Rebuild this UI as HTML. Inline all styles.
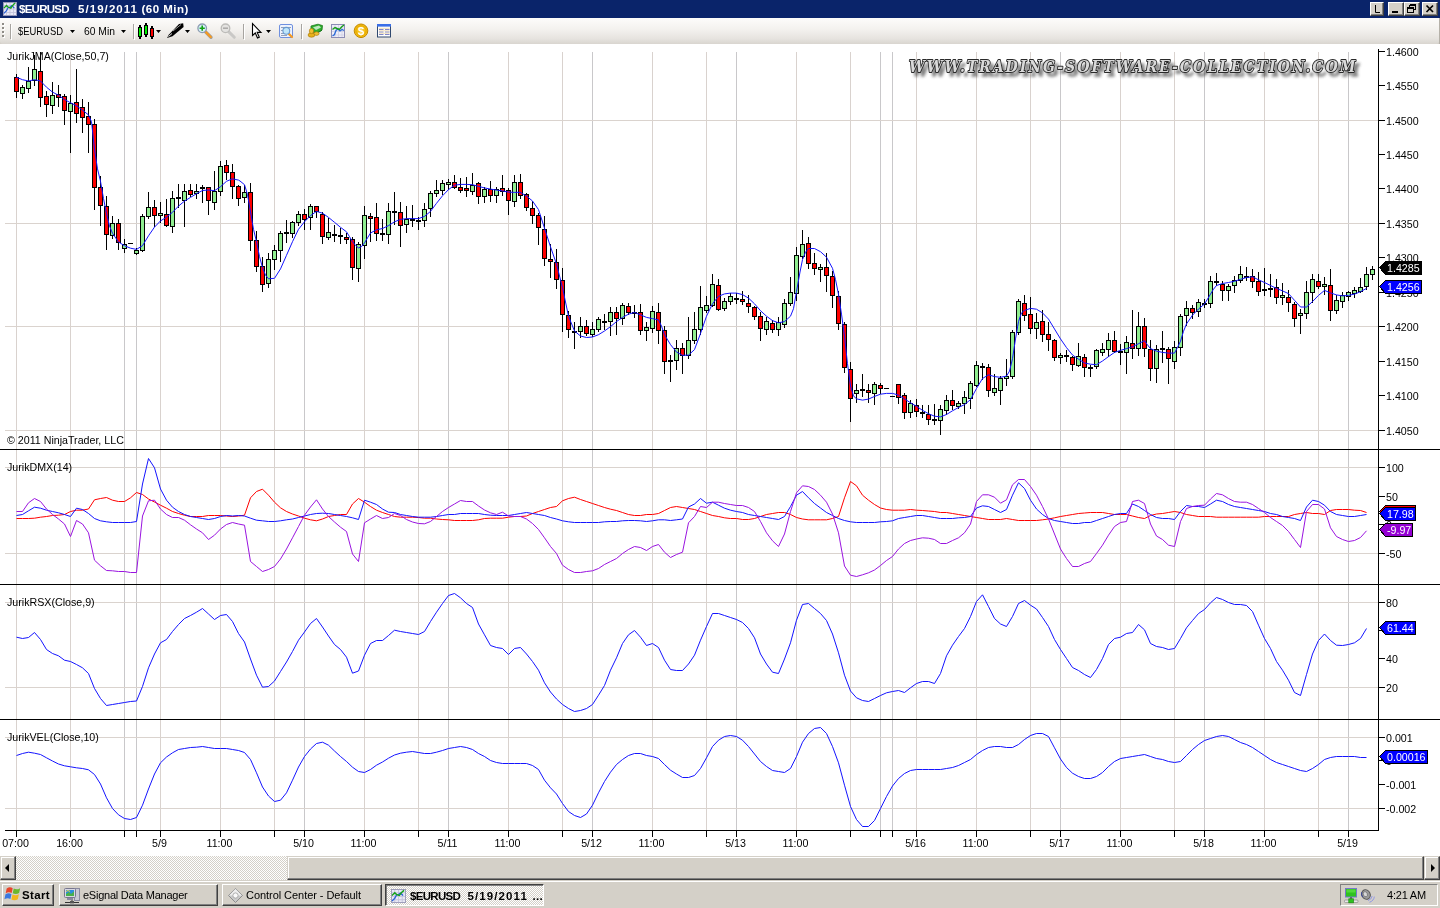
<!DOCTYPE html>
<html><head><meta charset="utf-8"><title>$EURUSD 5/19/2011 (60 Min)</title>
<style>
html,body{margin:0;padding:0}
body{width:1440px;height:908px;overflow:hidden;background:#d4d0c8;position:relative;font-family:"Liberation Sans",Arial,sans-serif;font-size:11px;color:#000}
.abs{position:absolute}
#title,#tb,#chartwrap,#task,.tbtn,#tray{will-change:transform}
#title{left:0;top:0;width:1440px;height:18px;background:#0a246a}
#title .t{left:19px;top:2px;color:#fff;font-weight:bold;font-size:11.5px;line-height:14px;white-space:pre;letter-spacing:0.39px}
.cb{top:2px;height:14px;background:#d4d0c8;box-sizing:border-box;border:1px solid;border-color:#fff #404040 #404040 #fff;box-shadow:inset -1px -1px 0 #808080}
#tb{left:0;top:18px;width:1439px;height:26px;background:linear-gradient(#fdfcfb 0%,#f3f1ee 45%,#e6e3df 80%,#d9d5cf 100%);border-radius:0 0 3px 3px}
#tbr{left:1439px;top:18px;width:1px;height:26px;background:#b5b1a9}
.tt{top:7px;font-size:11px;line-height:13px;white-space:pre}
.sep{top:6px;width:1px;height:16px;background:#a6a39d;box-shadow:1px 0 0 #fff}
.arr{width:0;height:0;border-left:3px solid transparent;border-right:3px solid transparent;border-top:3px solid #000}
#chart{left:0;top:44px}
#sb{left:0;top:856px;width:1440px;height:24px;background-color:#fff;background-image:linear-gradient(45deg,#d4d0c8 25%,transparent 25%,transparent 75%,#d4d0c8 75%),linear-gradient(45deg,#d4d0c8 25%,transparent 25%,transparent 75%,#d4d0c8 75%);background-size:2px 2px;background-position:1px 0,0 1px}
.sbb{background:#d4d0c8;box-sizing:border-box;border:1px solid;border-color:#d4d0c8 #404040 #404040 #d4d0c8;box-shadow:inset -1px -1px 0 #808080,inset 1px 1px 0 #fff}
.btn3{background:#d4d0c8;box-sizing:border-box;border:1px solid;border-color:#fff #404040 #404040 #fff;box-shadow:inset -1px -1px 0 #808080,inset 1px 1px 0 #d4d0c8}
#task{left:0;top:880px;width:1440px;height:28px;background:#d4d0c8;border-top:1px solid #d4d0c8;box-shadow:inset 0 1px 0 #fff;box-sizing:border-box}
.tbtn{top:884px;height:22px;font-size:11px;line-height:20px;white-space:pre}
.tbtn span{position:absolute;top:0}
</style></head><body>
<div id="title" class="abs">
<svg class="abs" style="left:3px;top:2px" width="14" height="14" viewBox="0 0 16 16"><rect x="0.5" y="0.5" width="15" height="15" fill="#e9e9f6" stroke="#9a9ab8"/><path d="M4 1V15M8 1V15M12 1V15M1 4H15M1 8H15M1 12H15" stroke="#c4c4dc" stroke-width="1"/><path d="M1 13L4 10L6 6L8 6L10 4L13 7" fill="none" stroke="#2a62d8" stroke-width="1.4"/><path d="M1 7L4 4L6 6L9 7L11 4L14 1" fill="none" stroke="#17a317" stroke-width="1.5"/></svg>
<div class="abs t" style="left:19px;letter-spacing:-0.74px">$EURUSD</div><div class="abs t" style="left:78px;letter-spacing:1.06px">5/19/2011</div><div class="abs t" style="left:141.5px;letter-spacing:0.48px">(60 Min)</div>
<div class="abs cb" style="left:1370px;width:14px"><svg class="abs" style="left:0;top:0" width="12" height="12"><path d="M4.5 2V9.5H9" fill="none" stroke="#000" stroke-width="1"/></svg></div>
<div class="abs cb" style="left:1388px;width:16px"><svg class="abs" style="left:0;top:0" width="14" height="12"><rect x="3" y="8" width="6" height="2" fill="#000"/></svg></div>
<div class="abs cb" style="left:1404px;width:16px"><svg class="abs" style="left:0;top:0" width="14" height="12" shape-rendering="crispEdges"><path d="M4.5 1.5H10.5V6.5H8.5M4.5 2.5H10.5M4.5 1.5V3.5" fill="none" stroke="#000"/><path d="M2.5 4.5H8.5V9.5H2.5ZM2.5 5.5H8.5" fill="none" stroke="#000"/></svg></div>
<div class="abs cb" style="left:1422px;width:16px"><svg class="abs" style="left:0;top:0" width="14" height="12"><path d="M3.5 2.5L10 9M10 2.5L3.5 9" fill="none" stroke="#000" stroke-width="1.7"/></svg></div>
</div>
<div id="tb" class="abs">
<svg class="abs" style="left:0;top:0" width="420" height="26" viewBox="0 18 420 26">
<g shape-rendering="crispEdges">
<path d="M2 23h2v2h-2zM2 27h2v2h-2zM2 31h2v2h-2zM2 35h2v2h-2z" fill="#fff" transform="translate(1,1)"/>
<path d="M2 23h2v2h-2zM2 27h2v2h-2zM2 31h2v2h-2zM2 35h2v2h-2z" fill="#8e8b86"/>
<path d="M10.5 24V39M133.5 24V39M243.5 24V39M301.5 24V39" stroke="#a7a4a0" fill="none"/>
<path d="M11.5 25V40M134.5 25V40M244.5 25V40M302.5 25V40" stroke="#fff" fill="none"/>
<path d="M70 30h5l-2.5 3zM121 30h5l-2.5 3zM156 30h5l-2.5 3zM185 30h5l-2.5 3zM266 30h5l-2.5 3z" fill="#000" shape-rendering="auto"/>
<!-- candles icon -->
<path d="M140 25V39M146 23V37M152 26V39" stroke="#000" stroke-width="2" fill="none"/>
<rect x="138.5" y="27.5" width="3" height="9" fill="#00f000" stroke="#000"/>
<rect x="144.5" y="25.5" width="3" height="9" fill="#00f000" stroke="#000"/>
<rect x="150.5" y="28.5" width="3" height="8" fill="#ff0000" stroke="#000"/>
</g>
<g font-family="Liberation Sans, Arial, sans-serif" font-size="11px" fill="#000">
<text x="18" y="35" textLength="45" lengthAdjust="spacingAndGlyphs">$EURUSD</text>
<text x="84" y="35" textLength="31" lengthAdjust="spacingAndGlyphs">60 Min</text>
</g>
<!-- pencil -->
<path d="M167 38L169 34.5L179 24L183.2 23.2L183.6 27L172.5 36.2Z" fill="#000"/>
<path d="M168.5 36.5L172 33.5" stroke="#fff" stroke-width="0.9"/>
<path d="M173 31L181 24.5" stroke="#ddd" stroke-width="0.7"/>
<!-- zoom in -->
<path d="M205.3 31.6L211 37.3" stroke="#9aa0a8" stroke-width="3.4" stroke-linecap="round"/>
<path d="M205.6 31.9L210.8 37.1" stroke="#f59a23" stroke-width="2.2" stroke-linecap="round"/>
<circle cx="202.2" cy="28.3" r="4.3" fill="#d6f0fb" stroke="#8c9bb0" stroke-width="1.3"/>
<path d="M199.6 28.2H204.8M202.2 25.6V30.8" stroke="#12a012" stroke-width="1.6"/>
<!-- zoom out (disabled) -->
<path d="M228.6 31.6L234.3 37.3" stroke="#c9c8c6" stroke-width="3" stroke-linecap="round"/>
<circle cx="225.5" cy="28.3" r="4.3" fill="#e4e3e1" stroke="#bcbbb8" stroke-width="1.3"/>
<path d="M223 28.2H228" stroke="#a9a8a6" stroke-width="1.5"/>
<!-- pointer -->
<path d="M252.5 23.5V35.5L255.3 33L257.5 38L259.3 37.2L257.2 32.4H261Z" fill="#fff" stroke="#000" stroke-width="1.1" stroke-linejoin="miter"/>
<!-- zoom window -->
<rect x="279.5" y="24.5" width="13" height="13" rx="1.5" fill="#eef3fd" stroke="#6f90e0"/>
<path d="M281 27.5H291M281 30.5H284M281 33.5H284M281 35.5H287" stroke="#7d8aa5" stroke-width="0.8"/>
<path d="M288.6 33.6L292 37" stroke="#f59a23" stroke-width="2.2" stroke-linecap="round"/>
<circle cx="286.3" cy="30.8" r="3.4" fill="#bfe6fa" stroke="#6a9ad0" stroke-width="1.1"/>
<!-- money -->
<path d="M311 26L318 24.2L322.5 25.6L322 30L316 33.5L311 31Z" fill="#2fae2f" stroke="#1c7a1c" stroke-width="0.8"/>
<path d="M313 27.2L319 25.6L321 27.5L316 30Z" fill="#bfe9bf"/>
<path d="M312 31.5L316.5 33.5L322 30.2" stroke="#167a16" stroke-width="1" fill="none"/>
<ellipse cx="311.5" cy="35" rx="3.4" ry="2.2" fill="#e8b21a" stroke="#a97a08" stroke-width="0.7"/>
<ellipse cx="316.5" cy="33.6" rx="2.6" ry="1.8" fill="#f0c030" stroke="#a97a08" stroke-width="0.7"/>
<ellipse cx="311.5" cy="31" rx="2.2" ry="2.6" fill="#f0c030" stroke="#b08010" stroke-width="0.7"/>
<!-- chart icon -->
<rect x="331.5" y="24.5" width="13" height="13" fill="#eeeef8" stroke="#8d8db5"/>
<path d="M335 25V37M338.5 25V37M342 25V37M332 28H344M332 31.5H344M332 35H344" stroke="#cfcfe3" stroke-width="0.8"/>
<path d="M332.5 36L334.5 34.5L336 30.5L338 29L340 31L342 29.5L344 30.5" fill="none" stroke="#2a6ad8" stroke-width="1.3"/>
<path d="M332.5 29.5L335 27.5L337 28.5L339.5 29.5L341.5 27L344 25" fill="none" stroke="#18a018" stroke-width="1.4"/>
<!-- gold coin -->
<circle cx="361" cy="30.8" r="6.8" fill="#f2b90f" stroke="#c48a00" stroke-width="1"/>
<circle cx="361" cy="30.8" r="5" fill="#f7c21a" stroke="#e0a400" stroke-width="0.8"/>
<text x="361" y="35" text-anchor="middle" font-family="Liberation Sans, Arial, sans-serif" font-weight="bold" font-size="11.5px" fill="#fff">$</text>
<!-- table icon -->
<rect x="377.5" y="24.5" width="13" height="12.5" fill="#fdfdfd" stroke="#30486e"/>
<rect x="377" y="24" width="14" height="2.6" fill="#3a6fe8"/>
<path d="M379 29.5H383.5M385 29.5H389.5M379 32H383.5M385 32H389.5M379 34.5H383.5M385 34.5H389.5" stroke="#7f86c8" stroke-width="1"/>
<path d="M379 28.3H389.5M379 30.8H389.5M379 33.3H389.5" stroke="#e7c98a" stroke-width="0.6"/>
</svg>

</div>
<div id="tbr" class="abs"></div>
<div class="abs" id="chartwrap" style="left:0;top:44px;width:1440px;height:812px;background:#fff">
<svg id="chart" width="1440" height="812" viewBox="0 44 1440 812">
<rect x="0" y="44" width="1440" height="812" fill="#fff"/>
<g shape-rendering="crispEdges" fill="none" stroke-width="1">
<path stroke="#d9d2ce" d="M16.5 52V830M70.5 52V830M160.5 52V830M220.5 52V830M274.5 52V830M364.5 52V830M418.5 52V830M508.5 52V830M562.5 52V830M652.5 52V830M706.5 52V830M796.5 52V830M850.5 52V830M916.5 52V830M976.5 52V830M1030.5 52V830M1120.5 52V830M1174.5 52V830M1264.5 52V830M1318.5 52V830"/>
<path stroke="#c9c8ca" d="M124.5 52V830M136.5 52V830M304.5 52V830M448.5 52V830M592.5 52V830M736.5 52V830M880.5 52V830M892.5 52V830M1060.5 52V830M1204.5 52V830M1348.5 52V830"/>
<path stroke="#dad3ce" d="M5 120.5H1378M5 223.5H1378M5 326.5H1378M5 430.5H1378M5 467.5H1378M5 553.5H1378M5 602.5H1378M5 687.5H1378M5 737.5H1378M5 808.5H1378"/>
<path stroke="#000" d="M0 449.5H1440M0 584.5H1440M0 719.5H1440"/>
</g>
<g shape-rendering="crispEdges">
<path fill="none" stroke="#000" stroke-width="1" d="M16.5 74V98M22.5 85V99M28.5 67V93M34.5 55V86M40.5 52V107M46.5 91V117M52.5 82V114M58.5 85V107M64.5 94V125M70.5 95V153M76.5 69V123M82.5 99V133M88.5 102V153M94.5 119V210M100.5 176V226M106.5 196V250M112.5 216V239M118.5 219V250M124.5 239V253M136.5 248V255M142.5 214V252M148.5 192V219M154.5 200V227M160.5 202V223M166.5 199V227M172.5 191V233M178.5 184V208M184.5 184V227M190.5 184V197M196.5 184V199M202.5 185V203M208.5 187V215M214.5 171V210M220.5 161V196M226.5 160V180M232.5 164V199M238.5 185V206M244.5 185V203M250.5 183V251M256.5 231V272M262.5 257V292M268.5 253V288M274.5 245V270M280.5 231V262M286.5 220V243M292.5 221V238M298.5 211V226M304.5 209V230M310.5 204V230M316.5 206V218M322.5 212V244M328.5 218V240M334.5 225V242M340.5 228V244M346.5 233V244M352.5 237V280M358.5 242V282M364.5 206V259M370.5 213V242M376.5 203V241M382.5 219V241M388.5 203V244M394.5 192V225M400.5 202V247M406.5 206V233M412.5 205V227M418.5 217V230M424.5 203V227M430.5 191V217M436.5 180V197M442.5 180V195M448.5 179V190M454.5 175V189M460.5 178V193M466.5 177V197M472.5 173V195M478.5 182V204M484.5 187V203M490.5 181V202M496.5 187V203M502.5 175V196M508.5 188V215M514.5 175V207M520.5 174V199M526.5 193V211M532.5 201V224M538.5 213V245M544.5 216V266M550.5 244V278M556.5 249V289M562.5 268V332M568.5 311V338M574.5 322V349M580.5 317V338M586.5 320V336M592.5 322V337M598.5 317V332M604.5 314V330M610.5 307V336M616.5 307V335M622.5 303V325M628.5 303V315M634.5 305V318M640.5 304V335M646.5 322V341M652.5 306V333M658.5 303V344M664.5 326V374M670.5 355V382M676.5 340V370M682.5 343V374M688.5 317V359M694.5 312V344M700.5 286V335M706.5 296V313M712.5 274V307M718.5 279V311M724.5 298V311M730.5 293V305M736.5 293V304M742.5 291V305M748.5 295V313M754.5 306V320M760.5 312V341M766.5 317V335M772.5 320V333M778.5 317V336M784.5 299V328M790.5 277V306M796.5 247V301M802.5 230V259M808.5 237V269M814.5 253V275M820.5 264V282M826.5 253V292M832.5 271V308M838.5 291V330M844.5 322V373M850.5 362V422M856.5 384V403M862.5 374V397M868.5 384V403M874.5 382V405M880.5 383V394M898.5 384V404M904.5 393V419M910.5 400V418M916.5 399V417M922.5 405V418M928.5 405V425M934.5 404V425M940.5 405V435M946.5 395V415M952.5 390V410M958.5 401V409M964.5 391V414M970.5 381V409M976.5 361V387M982.5 363V380M988.5 364V397M994.5 374V396M1000.5 376V405M1006.5 359V386M1012.5 330V379M1018.5 299V335M1024.5 295V321M1030.5 297V334M1036.5 313V339M1042.5 310V342M1048.5 322V351M1054.5 339V361M1060.5 353V364M1066.5 350V362M1072.5 356V371M1078.5 343V367M1084.5 354V377M1090.5 365V377M1096.5 349V369M1102.5 343V356M1108.5 333V357M1114.5 331V353M1120.5 344V365M1126.5 336V374M1132.5 310V359M1138.5 312V356M1144.5 318V357M1150.5 340V381M1156.5 345V383M1162.5 331V363M1168.5 347V384M1174.5 341V369M1180.5 314V356M1186.5 301V326M1192.5 305V319M1198.5 299V317M1204.5 299V308M1210.5 276V308M1216.5 273V286M1222.5 281V301M1228.5 284V301M1234.5 276V293M1240.5 266V283M1246.5 267V281M1252.5 269V288M1258.5 272V296M1264.5 268V296M1270.5 274V297M1276.5 279V304M1282.5 283V305M1288.5 290V312M1294.5 302V327M1300.5 309V334M1306.5 281V319M1312.5 274V303M1318.5 274V289M1324.5 277V295M1330.5 269V321M1336.5 295V314M1342.5 292V308M1348.5 291V301M1354.5 287V298M1360.5 278V293M1366.5 267V290M1372.5 266V280"/>
<path fill="#ff0000" stroke="#000" stroke-width="1" d="M14.5 77.5H18.5V91.5H14.5ZM38.5 71.5H42.5V97.5H38.5ZM44.5 96.5H48.5V104.5H44.5ZM56.5 94.5H60.5V97.5H56.5ZM62.5 96.5H66.5V110.5H62.5ZM74.5 102.5H78.5V113.5H74.5ZM80.5 107.5H84.5V117.5H80.5ZM86.5 116.5H90.5V124.5H86.5ZM92.5 124.5H96.5V187.5H92.5ZM98.5 187.5H102.5V205.5H98.5ZM104.5 206.5H108.5V234.5H104.5ZM116.5 223.5H120.5V242.5H116.5ZM152.5 207.5H156.5V215.5H152.5ZM164.5 214.5H168.5V225.5H164.5ZM188.5 190.5H192.5V194.5H188.5ZM206.5 187.5H210.5V200.5H206.5ZM224.5 165.5H228.5V172.5H224.5ZM230.5 172.5H234.5V186.5H230.5ZM236.5 186.5H240.5V198.5H236.5ZM248.5 192.5H252.5V240.5H248.5ZM254.5 240.5H258.5V266.5H254.5ZM260.5 266.5H264.5V284.5H260.5ZM302.5 214.5H306.5V219.5H302.5ZM314.5 206.5H318.5V211.5H314.5ZM320.5 214.5H324.5V236.5H320.5ZM344.5 237.5H348.5V239.5H344.5ZM350.5 239.5H354.5V267.5H350.5ZM368.5 216.5H372.5V218.5H368.5ZM374.5 217.5H378.5V233.5H374.5ZM398.5 212.5H402.5V225.5H398.5ZM452.5 182.5H456.5V187.5H452.5ZM458.5 187.5H462.5V190.5H458.5ZM464.5 188.5H468.5V190.5H464.5ZM476.5 183.5H480.5V196.5H476.5ZM488.5 189.5H492.5V195.5H488.5ZM500.5 188.5H504.5V191.5H500.5ZM506.5 190.5H510.5V200.5H506.5ZM518.5 182.5H522.5V195.5H518.5ZM524.5 194.5H528.5V207.5H524.5ZM530.5 208.5H534.5V215.5H530.5ZM536.5 215.5H540.5V227.5H536.5ZM542.5 229.5H546.5V258.5H542.5ZM548.5 259.5H552.5V261.5H548.5ZM554.5 262.5H558.5V279.5H554.5ZM560.5 280.5H564.5V314.5H560.5ZM566.5 315.5H570.5V329.5H566.5ZM584.5 326.5H588.5V333.5H584.5ZM614.5 312.5H618.5V318.5H614.5ZM626.5 306.5H630.5V312.5H626.5ZM638.5 312.5H642.5V330.5H638.5ZM656.5 312.5H660.5V330.5H656.5ZM662.5 330.5H666.5V361.5H662.5ZM680.5 348.5H684.5V355.5H680.5ZM716.5 285.5H720.5V309.5H716.5ZM740.5 299.5H744.5V301.5H740.5ZM746.5 303.5H750.5V306.5H746.5ZM752.5 307.5H756.5V316.5H752.5ZM758.5 316.5H762.5V328.5H758.5ZM770.5 323.5H774.5V329.5H770.5ZM806.5 243.5H810.5V263.5H806.5ZM812.5 263.5H816.5V268.5H812.5ZM824.5 267.5H828.5V275.5H824.5ZM830.5 276.5H834.5V295.5H830.5ZM836.5 296.5H840.5V323.5H836.5ZM842.5 324.5H846.5V367.5H842.5ZM848.5 369.5H852.5V398.5H848.5ZM866.5 390.5H870.5V392.5H866.5ZM878.5 385.5H882.5V388.5H878.5ZM896.5 384.5H900.5V397.5H896.5ZM902.5 395.5H906.5V412.5H902.5ZM914.5 405.5H918.5V411.5H914.5ZM926.5 414.5H930.5V419.5H926.5ZM950.5 400.5H954.5V405.5H950.5ZM986.5 367.5H990.5V390.5H986.5ZM1022.5 303.5H1026.5V315.5H1022.5ZM1028.5 314.5H1032.5V328.5H1028.5ZM1040.5 321.5H1044.5V334.5H1040.5ZM1046.5 334.5H1050.5V339.5H1046.5ZM1052.5 340.5H1056.5V357.5H1052.5ZM1070.5 357.5H1074.5V364.5H1070.5ZM1082.5 357.5H1086.5V367.5H1082.5ZM1112.5 340.5H1116.5V351.5H1112.5ZM1130.5 343.5H1134.5V348.5H1130.5ZM1142.5 326.5H1146.5V348.5H1142.5ZM1148.5 349.5H1152.5V368.5H1148.5ZM1166.5 349.5H1170.5V358.5H1166.5ZM1190.5 308.5H1194.5V312.5H1190.5ZM1220.5 284.5H1224.5V290.5H1220.5ZM1250.5 276.5H1254.5V281.5H1250.5ZM1256.5 281.5H1260.5V291.5H1256.5ZM1274.5 287.5H1278.5V297.5H1274.5ZM1286.5 297.5H1290.5V302.5H1286.5ZM1292.5 304.5H1296.5V318.5H1292.5ZM1316.5 281.5H1320.5V286.5H1316.5ZM1328.5 285.5H1332.5V310.5H1328.5Z"/>
<path fill="#90ee90" stroke="#000" stroke-width="1" d="M20.5 87.5H24.5V93.5H20.5ZM26.5 81.5H30.5V88.5H26.5ZM32.5 69.5H36.5V80.5H32.5ZM50.5 95.5H54.5V105.5H50.5ZM68.5 103.5H72.5V111.5H68.5ZM110.5 223.5H114.5V235.5H110.5ZM122.5 244.5H126.5V248.5H122.5ZM134.5 250.5H138.5V253.5H134.5ZM140.5 216.5H144.5V250.5H140.5ZM146.5 207.5H150.5V216.5H146.5ZM158.5 213.5H162.5V215.5H158.5ZM170.5 198.5H174.5V226.5H170.5ZM182.5 191.5H186.5V200.5H182.5ZM194.5 191.5H198.5V193.5H194.5ZM212.5 191.5H216.5V202.5H212.5ZM218.5 166.5H222.5V191.5H218.5ZM242.5 192.5H246.5V197.5H242.5ZM266.5 259.5H270.5V283.5H266.5ZM272.5 250.5H276.5V259.5H272.5ZM278.5 233.5H282.5V250.5H278.5ZM290.5 222.5H294.5V233.5H290.5ZM296.5 214.5H300.5V222.5H296.5ZM308.5 206.5H312.5V217.5H308.5ZM326.5 232.5H330.5V237.5H326.5ZM356.5 244.5H360.5V268.5H356.5ZM362.5 215.5H366.5V245.5H362.5ZM386.5 211.5H390.5V234.5H386.5ZM404.5 219.5H408.5V224.5H404.5ZM422.5 209.5H426.5V220.5H422.5ZM428.5 193.5H432.5V208.5H428.5ZM434.5 190.5H438.5V193.5H434.5ZM440.5 183.5H444.5V190.5H440.5ZM446.5 182.5H450.5V184.5H446.5ZM470.5 185.5H474.5V191.5H470.5ZM482.5 189.5H486.5V196.5H482.5ZM494.5 189.5H498.5V195.5H494.5ZM512.5 182.5H516.5V201.5H512.5ZM578.5 326.5H582.5V331.5H578.5ZM590.5 329.5H594.5V334.5H590.5ZM596.5 319.5H600.5V329.5H596.5ZM608.5 312.5H612.5V321.5H608.5ZM620.5 305.5H624.5V318.5H620.5ZM644.5 327.5H648.5V330.5H644.5ZM650.5 311.5H654.5V328.5H650.5ZM674.5 348.5H678.5V360.5H674.5ZM686.5 340.5H690.5V355.5H686.5ZM692.5 329.5H696.5V340.5H692.5ZM698.5 307.5H702.5V329.5H698.5ZM704.5 305.5H708.5V310.5H704.5ZM710.5 284.5H714.5V305.5H710.5ZM722.5 301.5H726.5V308.5H722.5ZM728.5 296.5H732.5V301.5H728.5ZM764.5 321.5H768.5V329.5H764.5ZM776.5 322.5H780.5V329.5H776.5ZM782.5 303.5H786.5V324.5H782.5ZM788.5 292.5H792.5V303.5H788.5ZM794.5 255.5H798.5V293.5H794.5ZM800.5 244.5H804.5V256.5H800.5ZM818.5 267.5H822.5V269.5H818.5ZM854.5 390.5H858.5V393.5H854.5ZM872.5 384.5H876.5V393.5H872.5ZM908.5 403.5H912.5V412.5H908.5ZM938.5 409.5H942.5V420.5H938.5ZM944.5 400.5H948.5V410.5H944.5ZM956.5 403.5H960.5V406.5H956.5ZM962.5 397.5H966.5V403.5H962.5ZM968.5 383.5H972.5V398.5H968.5ZM974.5 365.5H978.5V385.5H974.5ZM992.5 388.5H996.5V392.5H992.5ZM998.5 378.5H1002.5V390.5H998.5ZM1004.5 376.5H1008.5V378.5H1004.5ZM1010.5 332.5H1014.5V376.5H1010.5ZM1016.5 301.5H1020.5V332.5H1016.5ZM1034.5 322.5H1038.5V328.5H1034.5ZM1058.5 355.5H1062.5V357.5H1058.5ZM1076.5 356.5H1080.5V365.5H1076.5ZM1094.5 350.5H1098.5V366.5H1094.5ZM1100.5 349.5H1104.5V352.5H1100.5ZM1106.5 340.5H1110.5V349.5H1106.5ZM1124.5 342.5H1128.5V352.5H1124.5ZM1136.5 326.5H1140.5V348.5H1136.5ZM1154.5 349.5H1158.5V368.5H1154.5ZM1172.5 347.5H1176.5V361.5H1172.5ZM1178.5 316.5H1182.5V347.5H1178.5ZM1184.5 308.5H1188.5V315.5H1184.5ZM1196.5 302.5H1200.5V311.5H1196.5ZM1208.5 281.5H1212.5V303.5H1208.5ZM1226.5 286.5H1230.5V290.5H1226.5ZM1232.5 280.5H1236.5V285.5H1232.5ZM1238.5 274.5H1242.5V280.5H1238.5ZM1280.5 295.5H1284.5V297.5H1280.5ZM1298.5 313.5H1302.5V315.5H1298.5ZM1304.5 292.5H1308.5V313.5H1304.5ZM1310.5 279.5H1314.5V292.5H1310.5ZM1322.5 284.5H1326.5V286.5H1322.5ZM1334.5 300.5H1338.5V310.5H1334.5ZM1340.5 295.5H1344.5V301.5H1340.5ZM1346.5 292.5H1350.5V296.5H1346.5ZM1352.5 290.5H1356.5V293.5H1352.5ZM1358.5 287.5H1362.5V291.5H1358.5ZM1364.5 274.5H1368.5V286.5H1364.5ZM1370.5 269.5H1374.5V274.5H1370.5Z"/>
<path fill="none" stroke="#000" stroke-width="1" d="M128 243.5H133M176 197.5H181M176 198.5H181M200 187.5H205M200 188.5H205M284 232.5H289M284 233.5H289M332 234.5H337M332 235.5H337M338 235.5H343M338 236.5H343M380 233.5H385M380 234.5H385M392 211.5H397M392 212.5H397M410 219.5H415M410 220.5H415M416 220.5H421M416 221.5H421M572 331.5H577M572 332.5H577M602 321.5H607M602 322.5H607M632 312.5H637M632 313.5H637M668 360.5H673M668 361.5H673M734 298.5H739M734 299.5H739M860 389.5H865M860 390.5H865M884 388.5H889M890 396.5H895M920 412.5H925M920 413.5H925M932 419.5H937M932 420.5H937M980 366.5H985M980 367.5H985M1064 355.5H1069M1064 356.5H1069M1088 367.5H1093M1088 368.5H1093M1118 351.5H1123M1118 352.5H1123M1160 348.5H1165M1160 349.5H1165M1202 303.5H1207M1202 304.5H1207M1214 281.5H1219M1214 282.5H1219M1244 276.5H1249M1244 277.5H1249M1262 289.5H1267M1262 290.5H1267M1268 288.5H1273M1268 289.5H1273"/>
</g>
<g fill="none" stroke-width="1" stroke-linejoin="round">
<path stroke="#1414ff" d="M16.5 77.3 L22.5 79.7 L28.5 81.0 L34.5 79.7 L40.5 81.0 L46.5 87.2 L52.5 92.1 L58.5 95.3 L64.5 99.5 L70.5 102.8 L76.5 105.7 L82.5 110.2 L88.5 114.9 L91.5 121.8 L94.5 149.1 L97.5 168.9 L100.5 181.3 L103.5 198.6 L106.5 213.5 L109.5 225.9 L112.5 233.3 L118.5 242.0 L124.5 245.7 L130.5 248.2 L136.5 249.4 L142.5 245.7 L148.5 235.8 L154.5 227.1 L160.5 220.9 L166.5 217.2 L172.5 212.3 L178.5 206.1 L184.5 201.1 L190.5 197.4 L196.5 193.7 L202.5 190.5 L208.5 190.0 L214.5 190.7 L220.5 186.7 L226.5 181.3 L232.5 178.8 L238.5 180.1 L240.0 181.0 L244.5 184.7 L247.5 194.6 L250.5 211.9 L253.5 229.3 L256.5 241.7 L259.5 256.5 L262.5 267.7 L265.5 275.1 L268.5 278.8 L274.5 278.3 L280.5 268.9 L286.5 255.3 L292.5 241.7 L298.5 229.3 L304.5 221.8 L310.5 215.6 L316.5 211.4 L322.5 213.2 L328.5 217.4 L334.5 222.3 L340.5 227.3 L346.5 231.8 L349.5 236.7 L352.5 241.7 L355.5 245.4 L358.5 247.9 L361.5 246.6 L364.5 242.9 L367.5 237.9 L370.5 233.0 L376.5 229.8 L382.5 228.5 L388.5 225.6 L394.5 221.8 L400.5 219.4 L406.5 218.6 L412.5 218.6 L418.5 218.6 L424.5 216.4 L430.5 211.4 L436.5 203.3 L442.5 195.8 L448.5 189.6 L454.5 185.2 L460.5 184.4 L466.5 184.4 L472.5 184.7 L478.5 186.4 L484.5 187.9 L490.5 189.1 L496.5 190.1 L502.5 190.9 L508.5 192.1 L514.5 192.4 L520.0 192.3 L526.5 196.0 L532.5 201.0 L538.5 209.6 L544.5 228.2 L550.5 246.8 L556.5 264.1 L562.5 287.7 L568.5 316.2 L574.5 331.0 L580.5 336.0 L586.5 337.5 L592.5 337.0 L598.5 334.7 L604.5 331.0 L610.5 326.6 L616.5 321.6 L622.5 317.4 L628.5 314.2 L634.5 312.4 L640.5 314.9 L646.5 317.4 L652.5 318.6 L658.5 319.9 L661.5 326.1 L664.5 334.7 L670.5 344.6 L676.5 352.1 L682.5 355.3 L688.5 355.1 L694.5 349.6 L700.5 333.5 L706.5 316.2 L712.5 303.8 L718.5 296.3 L724.5 293.9 L730.5 293.1 L736.5 293.1 L742.5 294.6 L748.5 298.1 L754.5 303.8 L760.5 310.7 L766.5 316.2 L772.5 320.6 L778.5 322.8 L784.5 321.6 L790.5 316.2 L793.5 308.7 L796.5 291.4 L800.0 272.0 L802.5 259.6 L805.5 252.2 L808.5 248.5 L814.5 248.5 L820.5 251.7 L826.5 257.2 L832.5 268.3 L835.5 279.5 L838.5 294.3 L841.5 314.1 L844.5 336.4 L847.5 363.7 L850.5 386.0 L853.5 395.9 L856.5 398.9 L862.5 400.1 L868.5 399.1 L874.5 396.4 L880.5 394.2 L886.5 393.4 L892.5 393.4 L898.5 395.1 L904.5 398.9 L910.5 402.8 L916.5 406.3 L922.5 410.3 L928.5 413.7 L934.5 416.2 L940.5 416.9 L946.5 414.5 L952.5 410.8 L958.5 407.5 L964.5 404.6 L970.5 399.6 L976.5 388.5 L982.5 378.5 L988.5 374.8 L994.5 376.6 L1000.5 377.3 L1006.5 376.1 L1009.5 371.1 L1012.5 358.7 L1015.5 338.9 L1018.5 321.6 L1021.5 312.9 L1024.5 310.4 L1030.5 308.4 L1036.5 309.2 L1042.5 312.9 L1048.5 319.1 L1054.5 329.0 L1060.5 338.9 L1066.5 347.6 L1072.5 355.0 L1078.5 359.2 L1084.5 363.0 L1090.5 364.2 L1096.5 364.7 L1102.5 361.0 L1108.5 356.6 L1114.5 352.4 L1120.5 350.4 L1126.5 348.6 L1132.5 346.7 L1138.5 343.7 L1144.5 340.7 L1147.5 344.9 L1150.5 348.6 L1156.5 351.1 L1162.5 352.4 L1168.5 353.1 L1174.5 353.1 L1177.5 347.4 L1180.5 341.2 L1183.5 331.3 L1186.5 323.9 L1192.5 315.2 L1198.5 309.0 L1204.5 304.0 L1207.5 299.1 L1210.5 294.1 L1213.5 289.2 L1216.5 285.5 L1222.5 283.5 L1228.5 282.5 L1234.5 281.3 L1240.5 279.3 L1246.5 277.5 L1252.5 276.8 L1258.5 279.8 L1264.5 282.5 L1270.5 285.5 L1276.5 288.4 L1282.5 290.9 L1288.5 293.6 L1294.5 300.3 L1300.5 307.0 L1306.5 307.0 L1312.5 301.6 L1318.5 295.4 L1324.5 290.4 L1330.5 292.9 L1336.5 294.9 L1342.5 295.9 L1348.5 295.4 L1354.5 294.1 L1360.5 291.7 L1366.5 288.4"/>
<path stroke="#ff0000" d="M16.5 518.5 L22.5 518.5 L28.5 518.5 L34.5 518.2 L40.5 517.2 L46.5 516.5 L52.5 515.5 L58.5 515.2 L64.5 514.5 L70.5 511.5 L76.5 510.2 L82.5 510.2 L88.5 509.0 L94.5 499.8 L100.5 498.5 L106.5 497.5 L112.5 500.2 L118.5 501.5 L124.5 501.5 L130.5 497.8 L136.5 492.5 L142.5 494.5 L148.5 499.0 L154.5 502.0 L160.5 505.2 L166.5 508.2 L172.5 511.5 L178.5 513.5 L184.5 515.2 L190.5 516.5 L196.5 516.5 L202.5 516.5 L208.5 515.5 L214.5 515.5 L220.5 515.5 L226.5 516.0 L232.5 516.5 L238.5 516.0 L244.5 515.2 L250.5 497.8 L256.5 491.5 L262.5 489.2 L268.5 495.2 L274.5 502.2 L280.5 507.8 L286.5 511.5 L292.5 514.0 L298.5 516.0 L304.5 518.2 L310.5 519.8 L316.5 520.8 L322.5 519.0 L328.5 516.5 L334.5 515.5 L340.5 514.5 L346.5 514.5 L352.5 504.0 L358.5 498.5 L364.5 502.2 L370.5 506.5 L376.5 510.2 L382.5 512.5 L388.5 514.5 L394.5 516.5 L400.5 517.2 L406.5 517.2 L412.5 517.2 L418.5 517.5 L424.5 518.2 L430.5 518.2 L436.5 519.0 L442.5 519.5 L448.5 519.8 L454.5 520.5 L460.5 520.5 L466.5 520.5 L472.5 520.5 L478.5 519.8 L484.5 518.5 L490.5 518.2 L496.5 518.2 L502.5 518.2 L508.5 517.2 L514.5 516.5 L520.5 516.5 L526.5 516.0 L532.5 513.5 L538.5 511.5 L544.5 509.5 L550.5 507.5 L556.5 506.5 L562.5 500.8 L568.5 498.5 L574.5 497.2 L580.5 499.5 L586.5 501.5 L592.5 503.5 L598.5 505.5 L604.5 507.5 L610.5 509.2 L616.5 510.5 L622.5 512.5 L628.5 514.5 L634.5 515.5 L640.5 515.5 L646.5 514.5 L652.5 514.5 L658.5 513.5 L664.5 510.5 L670.5 507.5 L676.5 506.5 L682.5 507.5 L688.5 508.5 L694.5 509.5 L700.5 511.5 L706.5 513.5 L712.5 515.5 L718.5 516.5 L724.5 517.8 L730.5 518.5 L736.5 518.5 L742.5 519.5 L748.5 519.5 L754.5 518.5 L760.5 516.5 L766.5 514.5 L772.5 513.5 L778.5 512.5 L784.5 512.5 L790.5 514.5 L796.5 517.5 L802.5 519.0 L808.5 519.8 L814.5 519.8 L820.5 519.8 L826.5 519.8 L832.5 518.5 L838.5 516.5 L844.5 497.8 L850.5 481.5 L856.5 485.8 L862.5 495.2 L868.5 500.2 L874.5 504.5 L880.5 508.0 L886.5 509.5 L892.5 510.2 L898.5 510.2 L904.5 510.2 L910.5 509.5 L916.5 510.2 L922.5 510.5 L928.5 511.0 L934.5 511.5 L940.5 512.5 L946.5 512.5 L952.5 513.5 L958.5 514.5 L964.5 515.5 L970.5 516.5 L976.5 517.5 L982.5 518.5 L988.5 519.5 L994.5 519.5 L1000.5 519.5 L1006.5 518.5 L1012.5 519.5 L1018.5 520.5 L1024.5 520.5 L1030.5 520.5 L1036.5 520.5 L1042.5 519.8 L1048.5 519.0 L1054.5 517.8 L1060.5 516.5 L1066.5 515.5 L1072.5 514.5 L1078.5 513.5 L1084.5 513.0 L1090.5 512.5 L1096.5 512.5 L1102.5 512.5 L1108.5 513.5 L1114.5 514.5 L1120.5 514.5 L1126.5 514.5 L1132.5 516.0 L1138.5 517.5 L1144.5 518.5 L1150.5 515.5 L1156.5 514.0 L1162.5 513.5 L1168.5 512.5 L1174.5 511.5 L1180.5 512.5 L1186.5 514.5 L1192.5 515.5 L1198.5 516.5 L1204.5 516.5 L1210.5 516.5 L1216.5 517.2 L1222.5 517.2 L1228.5 517.2 L1234.5 517.2 L1240.5 517.2 L1246.5 517.2 L1252.5 517.2 L1258.5 517.2 L1264.5 516.5 L1270.5 516.5 L1276.5 516.5 L1282.5 516.5 L1288.5 516.5 L1294.5 514.5 L1300.5 513.5 L1306.5 512.5 L1312.5 513.5 L1318.5 513.5 L1324.5 514.5 L1330.5 510.5 L1336.5 509.5 L1342.5 509.5 L1348.5 509.5 L1354.5 510.2 L1360.5 510.5 L1366.5 512.5"/>
<path stroke="#1414ff" d="M16.5 515.5 L22.5 514.5 L28.5 510.8 L34.5 507.2 L40.5 508.2 L46.5 510.2 L52.5 511.5 L58.5 512.8 L64.5 514.5 L70.5 516.5 L76.5 508.2 L82.5 509.5 L88.5 513.5 L94.5 518.5 L100.5 520.8 L106.5 521.8 L112.5 522.5 L118.5 522.5 L124.5 522.5 L130.5 522.5 L136.5 521.5 L142.5 484.0 L148.5 458.5 L154.5 467.8 L160.5 489.0 L166.5 500.2 L172.5 507.2 L178.5 511.5 L184.5 514.5 L190.5 516.5 L196.5 517.5 L202.5 518.5 L208.5 519.5 L214.5 518.5 L220.5 516.5 L226.5 515.5 L232.5 516.0 L238.5 515.5 L244.5 516.0 L250.5 518.2 L256.5 520.2 L262.5 520.8 L268.5 521.5 L274.5 521.5 L280.5 520.8 L286.5 519.8 L292.5 519.0 L298.5 517.5 L304.5 516.0 L310.5 514.5 L316.5 513.5 L322.5 513.2 L328.5 513.5 L334.5 514.5 L340.5 515.5 L346.5 516.5 L352.5 517.8 L358.5 519.5 L364.5 500.2 L370.5 502.2 L376.5 504.5 L382.5 509.0 L388.5 512.2 L394.5 512.5 L400.5 514.5 L406.5 515.5 L412.5 516.5 L418.5 517.2 L424.5 517.2 L430.5 517.2 L436.5 516.5 L442.5 515.5 L448.5 514.5 L454.5 514.5 L460.5 513.5 L466.5 513.5 L472.5 513.5 L478.5 513.5 L484.5 514.5 L490.5 515.2 L496.5 515.5 L502.5 515.5 L508.5 515.5 L514.5 514.5 L520.5 513.5 L526.5 512.5 L532.5 513.5 L538.5 514.5 L544.5 515.5 L550.5 517.5 L556.5 519.0 L562.5 520.8 L568.5 521.8 L574.5 522.5 L580.5 522.5 L586.5 522.5 L592.5 522.5 L598.5 522.5 L604.5 521.8 L610.5 521.5 L616.5 521.5 L622.5 520.8 L628.5 520.5 L634.5 520.5 L640.5 520.8 L646.5 521.5 L652.5 520.8 L658.5 519.8 L664.5 519.8 L670.5 520.5 L676.5 519.8 L682.5 519.0 L688.5 507.0 L694.5 504.0 L700.5 498.5 L706.5 503.2 L712.5 502.2 L718.5 505.2 L724.5 508.2 L730.5 510.2 L736.5 511.5 L742.5 512.5 L748.5 514.5 L754.5 515.5 L760.5 516.5 L766.5 517.5 L772.5 518.5 L778.5 519.5 L784.5 516.5 L790.5 506.5 L796.5 495.2 L802.5 491.5 L808.5 497.8 L814.5 503.5 L820.5 508.0 L826.5 512.5 L832.5 515.5 L838.5 518.5 L844.5 520.5 L850.5 521.8 L856.5 522.5 L862.5 522.5 L868.5 522.5 L874.5 522.5 L880.5 521.8 L886.5 521.5 L892.5 520.8 L898.5 518.5 L904.5 517.5 L910.5 516.5 L916.5 515.5 L922.5 515.5 L928.5 516.5 L934.5 517.5 L940.5 518.5 L946.5 518.5 L952.5 518.5 L958.5 517.8 L964.5 517.5 L970.5 516.5 L976.5 508.0 L982.5 505.8 L988.5 506.5 L994.5 509.5 L1000.5 512.5 L1006.5 509.5 L1012.5 495.2 L1018.5 482.8 L1024.5 488.5 L1030.5 500.2 L1036.5 509.0 L1042.5 514.5 L1048.5 518.5 L1054.5 520.5 L1060.5 521.5 L1066.5 522.5 L1072.5 523.5 L1078.5 523.5 L1084.5 522.5 L1090.5 522.5 L1096.5 520.5 L1102.5 518.5 L1108.5 516.5 L1114.5 514.5 L1120.5 513.5 L1126.5 513.5 L1132.5 504.0 L1138.5 506.5 L1144.5 510.5 L1150.5 514.5 L1156.5 517.5 L1162.5 518.5 L1168.5 518.5 L1174.5 519.5 L1180.5 511.5 L1186.5 505.5 L1192.5 506.5 L1198.5 506.5 L1204.5 507.5 L1210.5 504.0 L1216.5 500.2 L1222.5 501.5 L1228.5 504.5 L1234.5 506.5 L1240.5 507.5 L1246.5 508.5 L1252.5 509.5 L1258.5 510.5 L1264.5 511.5 L1270.5 513.5 L1276.5 514.5 L1282.5 516.5 L1288.5 517.5 L1294.5 518.5 L1300.5 520.5 L1306.5 507.0 L1312.5 500.2 L1318.5 501.5 L1324.5 505.2 L1330.5 511.5 L1336.5 514.5 L1342.5 515.5 L1348.5 516.5 L1354.5 516.5 L1360.5 515.5 L1366.5 514.5"/>
<path stroke="#9a14e0" d="M16.5 511.5 L22.5 511.5 L28.5 502.8 L34.5 498.5 L40.5 501.5 L46.5 509.0 L52.5 514.5 L58.5 519.0 L64.5 524.0 L70.5 536.5 L76.5 520.5 L82.5 524.0 L88.5 532.8 L94.5 560.2 L100.5 565.8 L106.5 570.5 L112.5 570.8 L118.5 571.5 L124.5 571.5 L130.5 572.5 L136.5 572.5 L142.5 516.0 L148.5 500.8 L154.5 500.2 L160.5 509.0 L166.5 514.5 L172.5 517.5 L178.5 517.5 L184.5 520.2 L190.5 524.8 L196.5 529.0 L202.5 532.8 L208.5 539.5 L214.5 535.2 L220.5 529.0 L226.5 524.5 L232.5 522.5 L238.5 524.0 L244.5 525.2 L250.5 561.5 L256.5 566.5 L262.5 571.5 L268.5 569.5 L274.5 566.5 L280.5 559.0 L286.5 549.0 L292.5 537.8 L298.5 526.5 L304.5 515.2 L310.5 507.0 L316.5 499.8 L322.5 509.0 L328.5 516.5 L334.5 522.0 L340.5 527.2 L346.5 531.5 L352.5 554.0 L358.5 561.5 L364.5 522.8 L370.5 519.0 L376.5 515.5 L382.5 518.5 L388.5 517.5 L394.5 513.5 L400.5 515.5 L406.5 519.5 L412.5 522.0 L418.5 523.5 L424.5 523.8 L430.5 521.5 L436.5 516.5 L442.5 511.5 L448.5 507.5 L454.5 504.0 L460.5 500.5 L466.5 501.5 L472.5 501.5 L478.5 506.0 L484.5 510.0 L490.5 512.8 L496.5 514.5 L502.5 512.2 L508.5 516.0 L514.5 516.5 L520.5 516.5 L526.5 519.0 L532.5 523.5 L538.5 529.5 L544.5 537.8 L550.5 546.5 L556.5 553.5 L562.5 565.2 L568.5 569.5 L574.5 572.5 L580.5 572.5 L586.5 571.5 L592.5 570.8 L598.5 568.5 L604.5 564.5 L610.5 561.5 L616.5 558.5 L622.5 553.5 L628.5 549.5 L634.5 546.5 L640.5 547.5 L646.5 550.5 L652.5 546.5 L658.5 544.5 L664.5 552.2 L670.5 557.5 L676.5 554.5 L682.5 552.2 L688.5 522.8 L694.5 516.5 L700.5 506.5 L706.5 507.5 L712.5 502.2 L718.5 502.2 L724.5 503.5 L730.5 504.5 L736.5 505.5 L742.5 505.5 L748.5 507.5 L754.5 511.5 L760.5 521.5 L766.5 532.8 L772.5 540.8 L778.5 546.5 L784.5 534.0 L790.5 511.5 L796.5 492.8 L802.5 485.8 L808.5 486.5 L814.5 489.5 L820.5 495.2 L826.5 502.2 L832.5 514.0 L838.5 532.8 L844.5 566.0 L850.5 575.2 L856.5 576.5 L862.5 574.8 L868.5 572.8 L874.5 570.0 L880.5 565.5 L886.5 560.5 L892.5 556.5 L898.5 549.0 L904.5 543.5 L910.5 540.5 L916.5 539.0 L922.5 537.8 L928.5 538.2 L934.5 539.5 L940.5 543.5 L946.5 543.5 L952.5 540.5 L958.5 537.8 L964.5 532.8 L970.5 524.0 L976.5 501.5 L982.5 494.8 L988.5 494.8 L994.5 497.2 L1000.5 503.2 L1006.5 499.8 L1012.5 484.8 L1018.5 479.5 L1024.5 479.5 L1030.5 486.5 L1036.5 495.2 L1042.5 506.5 L1048.5 519.0 L1054.5 534.0 L1060.5 549.0 L1066.5 558.5 L1072.5 566.5 L1078.5 566.5 L1084.5 563.5 L1090.5 561.5 L1096.5 553.5 L1102.5 545.2 L1108.5 535.2 L1114.5 526.5 L1120.5 522.5 L1126.5 521.5 L1132.5 501.5 L1138.5 500.2 L1144.5 503.5 L1150.5 524.0 L1156.5 536.0 L1162.5 539.5 L1168.5 545.2 L1174.5 546.5 L1180.5 521.5 L1186.5 508.5 L1192.5 506.5 L1198.5 505.5 L1204.5 505.2 L1210.5 499.0 L1216.5 493.5 L1222.5 494.8 L1228.5 498.5 L1234.5 501.5 L1240.5 502.2 L1246.5 502.2 L1252.5 504.5 L1258.5 508.5 L1264.5 512.5 L1270.5 517.5 L1276.5 521.5 L1282.5 525.5 L1288.5 531.5 L1294.5 539.5 L1300.5 547.5 L1306.5 511.5 L1312.5 504.5 L1318.5 504.5 L1324.5 509.0 L1330.5 527.8 L1336.5 536.5 L1342.5 539.5 L1348.5 541.5 L1354.5 540.5 L1360.5 537.5 L1366.5 530.8"/>
<path stroke="#1414ff" d="M16.5 637.2 L22.5 638.5 L28.5 637.5 L34.5 632.5 L40.5 639.5 L46.5 649.5 L52.5 653.5 L58.5 655.8 L64.5 660.2 L70.5 661.5 L76.5 664.5 L82.5 667.8 L88.5 673.5 L94.5 688.5 L100.5 698.5 L106.5 705.5 L112.5 704.5 L118.5 703.5 L124.5 702.5 L130.5 701.5 L136.5 701.0 L142.5 686.5 L148.5 667.8 L154.5 654.0 L160.5 642.8 L166.5 639.5 L172.5 631.5 L178.5 624.5 L184.5 618.5 L190.5 615.5 L196.5 612.2 L202.5 608.5 L208.5 614.0 L214.5 619.5 L220.5 615.5 L226.5 614.5 L232.5 621.5 L238.5 633.5 L244.5 642.0 L250.5 659.0 L256.5 675.2 L262.5 687.2 L268.5 686.5 L274.5 681.0 L280.5 671.5 L286.5 662.0 L292.5 651.5 L298.5 640.2 L304.5 632.0 L310.5 623.5 L316.5 618.5 L322.5 627.0 L328.5 636.0 L334.5 644.5 L340.5 649.5 L346.5 657.2 L352.5 673.2 L358.5 671.0 L364.5 655.2 L370.5 643.5 L376.5 640.5 L382.5 640.5 L388.5 635.5 L394.5 630.2 L400.5 631.5 L406.5 632.5 L412.5 633.5 L418.5 634.5 L424.5 631.5 L430.5 621.5 L436.5 612.2 L442.5 603.5 L448.5 595.5 L454.5 593.5 L460.5 597.8 L466.5 603.5 L472.5 607.5 L478.5 624.0 L484.5 634.8 L490.5 645.5 L496.5 647.5 L502.5 648.5 L508.5 654.5 L514.5 648.5 L520.5 647.5 L526.5 654.0 L532.5 661.5 L538.5 670.2 L544.5 682.8 L550.5 692.0 L556.5 699.0 L562.5 704.5 L568.5 708.5 L574.5 711.5 L580.5 710.5 L586.5 708.5 L592.5 704.5 L598.5 695.2 L604.5 685.5 L610.5 670.2 L616.5 657.8 L622.5 643.5 L628.5 634.8 L634.5 630.5 L640.5 637.2 L646.5 645.5 L652.5 643.5 L658.5 647.5 L664.5 660.2 L670.5 669.5 L676.5 670.5 L682.5 670.5 L688.5 664.0 L694.5 655.2 L700.5 640.2 L706.5 626.5 L712.5 613.5 L718.5 613.5 L724.5 615.5 L730.5 617.5 L736.5 619.5 L742.5 622.5 L748.5 628.5 L754.5 637.8 L760.5 654.0 L766.5 664.0 L772.5 672.2 L778.5 673.5 L784.5 659.0 L790.5 642.8 L796.5 620.2 L802.5 604.5 L808.5 603.5 L814.5 608.5 L820.5 613.5 L826.5 620.5 L832.5 634.0 L838.5 652.8 L844.5 675.2 L850.5 691.0 L856.5 697.8 L862.5 700.5 L868.5 701.5 L874.5 698.5 L880.5 695.5 L886.5 692.8 L892.5 691.5 L898.5 690.5 L904.5 692.5 L910.5 687.8 L916.5 683.5 L922.5 681.5 L928.5 681.5 L934.5 683.5 L940.5 673.5 L946.5 655.8 L952.5 645.2 L958.5 636.5 L964.5 628.5 L970.5 616.5 L976.5 601.5 L982.5 594.8 L988.5 606.5 L994.5 618.5 L1000.5 624.0 L1006.5 626.5 L1012.5 616.5 L1018.5 603.5 L1024.5 600.5 L1030.5 605.2 L1036.5 609.0 L1042.5 617.5 L1048.5 626.5 L1054.5 639.5 L1060.5 649.5 L1066.5 658.5 L1072.5 667.5 L1078.5 670.5 L1084.5 674.5 L1090.5 677.5 L1096.5 669.5 L1102.5 658.5 L1108.5 644.5 L1114.5 638.5 L1120.5 637.2 L1126.5 633.5 L1132.5 632.5 L1138.5 624.5 L1144.5 629.8 L1150.5 643.5 L1156.5 646.5 L1162.5 647.5 L1168.5 649.5 L1174.5 648.5 L1180.5 638.5 L1186.5 627.8 L1192.5 620.5 L1198.5 613.5 L1204.5 609.5 L1210.5 602.8 L1216.5 597.5 L1222.5 599.5 L1228.5 602.5 L1234.5 604.5 L1240.5 604.5 L1246.5 605.5 L1252.5 611.5 L1258.5 625.2 L1264.5 638.5 L1270.5 648.5 L1276.5 661.5 L1282.5 670.2 L1288.5 680.2 L1294.5 692.5 L1300.5 695.5 L1306.5 674.5 L1312.5 654.0 L1318.5 640.5 L1324.5 634.0 L1330.5 640.5 L1336.5 645.2 L1342.5 645.5 L1348.5 644.5 L1354.5 642.8 L1360.5 638.5 L1366.5 628.5"/>
<path stroke="#1414ff" d="M16.5 755.5 L22.5 753.5 L28.5 752.2 L34.5 753.2 L40.5 754.5 L46.5 757.8 L52.5 761.0 L58.5 764.0 L64.5 765.8 L70.5 766.8 L76.5 767.8 L82.5 768.5 L88.5 769.8 L94.5 774.5 L100.5 784.0 L106.5 797.8 L112.5 808.5 L118.5 814.8 L124.5 818.5 L130.5 819.5 L136.5 817.5 L142.5 805.2 L148.5 789.0 L154.5 774.0 L160.5 762.8 L166.5 757.0 L172.5 752.8 L178.5 749.5 L184.5 748.5 L190.5 747.5 L196.5 747.2 L202.5 746.5 L208.5 747.5 L214.5 748.5 L220.5 748.5 L226.5 748.5 L232.5 749.5 L238.5 750.5 L244.5 752.5 L250.5 759.5 L256.5 772.8 L262.5 787.0 L268.5 796.0 L274.5 801.5 L280.5 800.2 L286.5 792.8 L292.5 780.2 L298.5 767.0 L304.5 756.5 L310.5 749.0 L316.5 743.5 L322.5 742.2 L328.5 745.2 L334.5 751.0 L340.5 756.5 L346.5 761.5 L352.5 767.2 L358.5 771.5 L364.5 772.5 L370.5 769.5 L376.5 765.2 L382.5 762.0 L388.5 758.2 L394.5 755.0 L400.5 753.2 L406.5 752.2 L412.5 751.5 L418.5 752.5 L424.5 753.5 L430.5 753.5 L436.5 752.2 L442.5 750.5 L448.5 748.5 L454.5 747.5 L460.5 746.5 L466.5 747.5 L472.5 749.5 L478.5 753.5 L484.5 756.5 L490.5 760.5 L496.5 762.5 L502.5 763.5 L508.5 763.5 L514.5 763.5 L520.5 763.5 L526.5 763.5 L532.5 765.5 L538.5 769.5 L544.5 780.2 L550.5 787.8 L556.5 794.0 L562.5 803.5 L568.5 811.5 L574.5 815.5 L580.5 817.5 L586.5 814.0 L592.5 805.2 L598.5 792.8 L604.5 781.5 L610.5 772.2 L616.5 764.5 L622.5 759.5 L628.5 755.5 L634.5 753.5 L640.5 753.5 L646.5 755.5 L652.5 756.5 L658.5 758.5 L664.5 764.5 L670.5 770.2 L676.5 774.0 L682.5 777.5 L688.5 777.5 L694.5 775.5 L700.5 768.5 L706.5 757.8 L712.5 746.5 L718.5 740.2 L724.5 736.5 L730.5 735.5 L736.5 736.5 L742.5 740.2 L748.5 746.5 L754.5 754.0 L760.5 761.5 L766.5 766.5 L772.5 770.5 L778.5 771.5 L784.5 772.5 L790.5 768.5 L796.5 756.5 L802.5 742.2 L808.5 733.5 L814.5 728.5 L820.5 727.5 L826.5 733.5 L832.5 746.5 L838.5 762.8 L844.5 785.2 L850.5 806.5 L856.5 819.5 L862.5 826.5 L868.5 826.5 L874.5 820.5 L880.5 808.5 L886.5 796.5 L892.5 786.0 L898.5 778.5 L904.5 773.5 L910.5 770.5 L916.5 769.5 L922.5 769.5 L928.5 769.5 L934.5 769.5 L940.5 769.5 L946.5 768.5 L952.5 767.5 L958.5 765.5 L964.5 762.5 L970.5 759.5 L976.5 754.5 L982.5 750.5 L988.5 747.5 L994.5 746.5 L1000.5 746.5 L1006.5 747.5 L1012.5 747.5 L1018.5 744.5 L1024.5 739.5 L1030.5 735.5 L1036.5 733.5 L1042.5 733.5 L1048.5 736.5 L1054.5 747.8 L1060.5 759.0 L1066.5 767.5 L1072.5 773.2 L1078.5 776.5 L1084.5 778.5 L1090.5 778.5 L1096.5 776.5 L1102.5 772.5 L1108.5 766.5 L1114.5 761.5 L1120.5 758.5 L1126.5 757.5 L1132.5 756.5 L1138.5 755.5 L1144.5 754.5 L1150.5 756.5 L1156.5 758.5 L1162.5 759.5 L1168.5 761.5 L1174.5 762.5 L1180.5 761.5 L1186.5 755.5 L1192.5 749.5 L1198.5 744.5 L1204.5 740.5 L1210.5 738.5 L1216.5 736.5 L1222.5 735.5 L1228.5 736.5 L1234.5 739.5 L1240.5 742.5 L1246.5 744.5 L1252.5 747.5 L1258.5 751.5 L1264.5 755.5 L1270.5 759.5 L1276.5 762.5 L1282.5 764.5 L1288.5 766.5 L1294.5 768.5 L1300.5 770.5 L1306.5 771.5 L1312.5 768.5 L1318.5 764.5 L1324.5 759.5 L1330.5 757.5 L1336.5 756.5 L1342.5 756.5 L1348.5 756.5 L1354.5 756.5 L1360.5 757.5 L1366.5 757.5"/>
</g>
<g shape-rendering="crispEdges" fill="none" stroke="#000" stroke-width="1">
<path d="M1378.5 49V831M5 830.5H1379"/>
<path d="M1379 51.5H1385M1379 85.5H1385M1379 120.5H1385M1379 154.5H1385M1379 188.5H1385M1379 223.5H1385M1379 257.5H1385M1379 292.5H1385M1379 326.5H1385M1379 361.5H1385M1379 395.5H1385M1379 430.5H1385M1379 467.5H1385M1379 496.5H1385M1379 524.5H1385M1379 553.5H1385M1379 602.5H1385M1379 630.5H1385M1379 658.5H1385M1379 687.5H1385M1379 737.5H1385M1379 760.5H1385M1379 784.5H1385M1379 808.5H1385"/>
<path d="M16.5 831V837M70.5 831V837M124.5 831V837M136.5 831V837M160.5 831V837M220.5 831V837M274.5 831V837M304.5 831V837M364.5 831V837M418.5 831V837M448.5 831V837M508.5 831V837M562.5 831V837M592.5 831V837M652.5 831V837M706.5 831V837M736.5 831V837M796.5 831V837M850.5 831V837M880.5 831V837M892.5 831V837M916.5 831V837M976.5 831V837M1030.5 831V837M1060.5 831V837M1120.5 831V837M1174.5 831V837M1204.5 831V837M1264.5 831V837M1318.5 831V837M1348.5 831V837"/>
</g>
<g font-family="Liberation Sans, Arial, sans-serif" font-size="10.67px" fill="#000">
<text x="1386" y="56">1.4600</text>
<text x="1386" y="90">1.4550</text>
<text x="1386" y="125">1.4500</text>
<text x="1386" y="159">1.4450</text>
<text x="1386" y="193">1.4400</text>
<text x="1386" y="228">1.4350</text>
<text x="1386" y="262">1.4300</text>
<text x="1386" y="297">1.4250</text>
<text x="1386" y="331">1.4200</text>
<text x="1386" y="366">1.4150</text>
<text x="1386" y="400">1.4100</text>
<text x="1386" y="435">1.4050</text>
<text x="1386" y="472">100</text>
<text x="1386" y="501">50</text>
<text x="1386" y="529">0</text>
<text x="1386" y="558">-50</text>
<text x="1386" y="607">80</text>
<text x="1386" y="635">60</text>
<text x="1386" y="663">40</text>
<text x="1386" y="692">20</text>
<text x="1386" y="742">0.001</text>
<text x="1386" y="765">0</text>
<text x="1386" y="789">-0.001</text>
<text x="1386" y="813">-0.002</text>
<text x="15.5" y="847" text-anchor="middle">07:00</text>
<text x="69.5" y="847" text-anchor="middle">16:00</text>
<text x="159.5" y="847" text-anchor="middle">5/9</text>
<text x="219.5" y="847" text-anchor="middle">11:00</text>
<text x="303.5" y="847" text-anchor="middle">5/10</text>
<text x="363.5" y="847" text-anchor="middle">11:00</text>
<text x="447.5" y="847" text-anchor="middle">5/11</text>
<text x="507.5" y="847" text-anchor="middle">11:00</text>
<text x="591.5" y="847" text-anchor="middle">5/12</text>
<text x="651.5" y="847" text-anchor="middle">11:00</text>
<text x="735.5" y="847" text-anchor="middle">5/13</text>
<text x="795.5" y="847" text-anchor="middle">11:00</text>
<text x="915.5" y="847" text-anchor="middle">5/16</text>
<text x="975.5" y="847" text-anchor="middle">11:00</text>
<text x="1059.5" y="847" text-anchor="middle">5/17</text>
<text x="1119.5" y="847" text-anchor="middle">11:00</text>
<text x="1203.5" y="847" text-anchor="middle">5/18</text>
<text x="1263.5" y="847" text-anchor="middle">11:00</text>
<text x="1347.5" y="847" text-anchor="middle">5/19</text>
<text x="7" y="60">JurikJMA(Close,50,7)</text>
<text x="7" y="444">© 2011 NinjaTrader, LLC</text>
<text x="7" y="471">JurikDMX(14)</text>
<text x="7" y="606">JurikRSX(Close,9)</text>
<text x="7" y="741">JurikVEL(Close,10)</text>
</g>
<path shape-rendering="crispEdges" d="M1379.5 267.5L1385.5 261.5H1421.5V274.5H1385.5Z" fill="#000" stroke="#000" stroke-width="1"/>
<text x="1387" y="272" font-family="Liberation Sans, Arial, sans-serif" font-size="10.67px" fill="#fff">1.4285</text>
<path shape-rendering="crispEdges" d="M1379.5 286.5L1385.5 280.5H1421.5V293.5H1385.5Z" fill="#0000ff" stroke="#000" stroke-width="1"/>
<text x="1387" y="291" font-family="Liberation Sans, Arial, sans-serif" font-size="10.67px" fill="#fff">1.4256</text>
<path shape-rendering="crispEdges" d="M1379.5 511.5L1385.5 505.5H1415.5V518.5H1385.5Z" fill="#ff0000" stroke="#000" stroke-width="1"/>
<text x="1387" y="516" font-family="Liberation Sans, Arial, sans-serif" font-size="10.67px" fill="#fff"></text>
<path shape-rendering="crispEdges" d="M1379.5 513.5L1385.5 507.5H1415.5V520.5H1385.5Z" fill="#0000ff" stroke="#000" stroke-width="1"/>
<text x="1387" y="518" font-family="Liberation Sans, Arial, sans-serif" font-size="10.67px" fill="#fff">17.98</text>
<path shape-rendering="crispEdges" d="M1379.5 529.5L1385.5 523.5H1412.5V536.5H1385.5Z" fill="#9400d3" stroke="#000" stroke-width="1"/>
<text x="1387" y="534" font-family="Liberation Sans, Arial, sans-serif" font-size="10.67px" fill="#fff">-9.97</text>
<path shape-rendering="crispEdges" d="M1379.5 627.5L1385.5 621.5H1415.5V634.5H1385.5Z" fill="#0000ff" stroke="#000" stroke-width="1"/>
<text x="1387" y="632" font-family="Liberation Sans, Arial, sans-serif" font-size="10.67px" fill="#fff">61.44</text>
<path shape-rendering="crispEdges" d="M1379.5 756.5L1385.5 750.5H1427.5V763.5H1385.5Z" fill="#0000ff" stroke="#000" stroke-width="1"/>
<text x="1387" y="761" font-family="Liberation Sans, Arial, sans-serif" font-size="10.67px" fill="#fff">0.00016</text>
<defs><filter id="blur" x="-5%" y="-60%" width="110%" height="220%"><feGaussianBlur stdDeviation="1.6"/></filter></defs>
<g font-family="DejaVu Serif Condensed, DejaVu Serif, Liberation Serif, serif" font-weight="bold" font-style="italic" font-size="17.5px">
<text transform="translate(912.5,76.3) scale(0.9,1)" x="0" y="0" fill="#333" stroke="#333" stroke-width="1.600" opacity="0.620" filter="url(#blur)" textLength="496" lengthAdjust="spacing">WWW.TRADING-SOFTWARE-COLLECTION.COM</text>
<text transform="translate(909,72.3) scale(0.9,1)" x="0" y="0" fill="#d9d9d9" stroke="#2a2a2a" stroke-width="1.900" stroke-linejoin="round" paint-order="stroke" textLength="496" lengthAdjust="spacing">WWW.TRADING-SOFTWARE-COLLECTION.COM</text>
</g>
</svg>
</div>
<div id="sb" class="abs">
<div class="abs sbb" style="left:0;top:0;width:16px;height:24px"><div class="abs" style="left:4px;top:7px;width:0;height:0;border-top:4px solid transparent;border-bottom:4px solid transparent;border-right:4px solid #000"></div></div>
<div class="abs sbb" style="left:287px;top:0;width:1137px;height:24px"></div>
<div class="abs sbb" style="left:1424px;top:0;width:16px;height:24px"><div class="abs" style="left:6px;top:7px;width:0;height:0;border-top:4px solid transparent;border-bottom:4px solid transparent;border-left:4px solid #000"></div></div>
</div>
<div id="task" class="abs"></div>
<div class="abs tbtn btn3" style="left:2px;width:52px;font-weight:bold"><svg class="abs" style="left:1px;top:0px" width="17" height="17" viewBox="-1 0 16 16"><path d="M1.5 3.2Q4.5 1.2 7.2 3L6.2 7.6Q3.6 6 0.6 7.8Z" fill="#e8452c"/><path d="M8.2 3.4Q11 5 14.2 3L13.2 7.6Q10.2 9.4 7.2 7.8Z" fill="#6ab82e"/><path d="M0.4 8.8Q3.4 7 6 8.6L5 13.2Q2.4 11.6 -0.6 13.4Z" fill="#3a78e0"/><path d="M7 9Q10 10.6 13 8.8L12 13.4Q9 15.2 6 13.6Z" fill="#f2b71c"/></svg><span style="left:19px;font-size:11.5px;letter-spacing:0.36px">Start</span></div>
<div class="abs tbtn btn3" style="left:59px;width:159px"><svg class="abs" style="left:4px;top:2px" width="17" height="17" viewBox="0 0 17 17"><rect x="10.5" y="1.5" width="5" height="12" fill="#c9c9d6" stroke="#8a8aa0"/><rect x="0.5" y="1.5" width="11" height="9" rx="1" fill="#d8d8e4" stroke="#77778f"/><rect x="2" y="3" width="8" height="6" fill="#2b8fe0"/><path d="M2 7L5 5L7 7L10 4.5V9H2Z" fill="#49b04a"/><path d="M2 4.5L4 3.5L6 4.5" stroke="#f0d040" fill="none"/><rect x="3" y="11" width="6" height="2" fill="#8a8aa0"/><path d="M1 15.5H15M8 13V15.500" stroke="#333" stroke-width="1"/><rect x="6" y="14" width="4" height="2.400" fill="#555"/></svg><span style="left:23px;letter-spacing:-0.25px">eSignal Data Manager</span></div>
<div class="abs tbtn btn3" style="left:222px;width:160px"><svg class="abs" style="left:5px;top:3px" width="15" height="15" viewBox="0 0 15 15"><path d="M7.5 0.5L14.500 7.5L7.5 14.500L0.5 7.5Z" fill="#c9c9c9" stroke="#8d8d8d"/><path d="M7.5 0.800L14 7.5H1Z" fill="#ededed"/><circle cx="7.5" cy="7.500" r="2.600" fill="#fafafa" stroke="#a0a0a0" stroke-width="0.800"/></svg><span style="left:23px;letter-spacing:-0.05px">Control Center - Default</span></div>
<div class="abs tbtn" style="left:385px;width:159px;background-color:#fff;background-image:linear-gradient(45deg,#d4d0c8 25%,transparent 25%,transparent 75%,#d4d0c8 75%),linear-gradient(45deg,#d4d0c8 25%,transparent 25%,transparent 75%,#d4d0c8 75%);background-size:2px 2px;background-position:1px 0,0 1px;box-sizing:border-box;border:1px solid;border-color:#404040 #fff #fff #404040;box-shadow:inset 1px 1px 0 #808080;font-weight:bold"><svg class="abs" style="left:5px;top:4px" width="15" height="14" viewBox="0 0 16 15"><rect x="0.5" y="0.5" width="15" height="14" fill="#e9e9f6" stroke="#9a9ab8"/><path d="M4 1V14M8 1V14M12 1V14M1 4H15M1 8H15M1 11.5H15" stroke="#c4c4dc" stroke-width="1"/><path d="M1 13L4 10L6 6L8 6L10 4.500L13 7" fill="none" stroke="#2a62d8" stroke-width="1.400"/><path d="M1 7L4 4L6 6L9 7L11 4L14 1.500" fill="none" stroke="#17a317" stroke-width="1.500"/></svg><span style="left:24px;top:1px;font-size:11.5px;letter-spacing:-0.7px">$EURUSD</span><span style="left:81.5px;top:1px;font-size:11.5px;letter-spacing:1.1px">5/19/2011</span><span style="left:146.5px;top:1px;font-size:11.5px;letter-spacing:0.3px">...</span></div>
<div class="abs" id="tray" style="left:1340px;top:884px;width:98px;height:22px;box-sizing:border-box;border:1px solid;border-color:#808080 #fff #fff #808080">
<svg class="abs" style="left:3px;top:2px" width="34" height="18" viewBox="0 0 34 18"><rect x="1.500" y="1.500" width="11" height="8.500" fill="#2fc21f" stroke="#7478c8"/><rect x="2.500" y="2.500" width="9" height="3" fill="#52d83a"/><path d="M7 10V13" stroke="#555" stroke-width="1.500"/><rect x="0.500" y="13" width="13.500" height="2.600" rx="1" fill="#e8e8e8" stroke="#909090" stroke-width="0.800"/><rect x="4.800" y="11.800" width="4.600" height="4" fill="#2fc21f" stroke="#1a8a10" stroke-width="0.700"/><ellipse cx="22" cy="7.500" rx="4.200" ry="5" fill="#9a9a9a" stroke="#555" stroke-width="0.900" transform="rotate(-25 22 7.500)"/><ellipse cx="21.300" cy="7.200" rx="2" ry="2.600" fill="#d8d8d8" stroke="#666" stroke-width="0.600" transform="rotate(-25 21.300 7.200)"/><path d="M17.800 5.200Q16.800 8 18.600 10" stroke="#3040a0" fill="none" stroke-width="0.900"/><path d="M24 13.500Q27.500 12.500 28.200 9M25.500 15.300Q30 13.600 30.300 9.600" stroke="#8890e8" fill="none" stroke-width="0.900"/></svg>
<span class="abs" style="left:46px;top:4px;font-size:11px;line-height:13px;white-space:pre;letter-spacing:-0.2px">4:21 AM</span></div>

</body></html>
